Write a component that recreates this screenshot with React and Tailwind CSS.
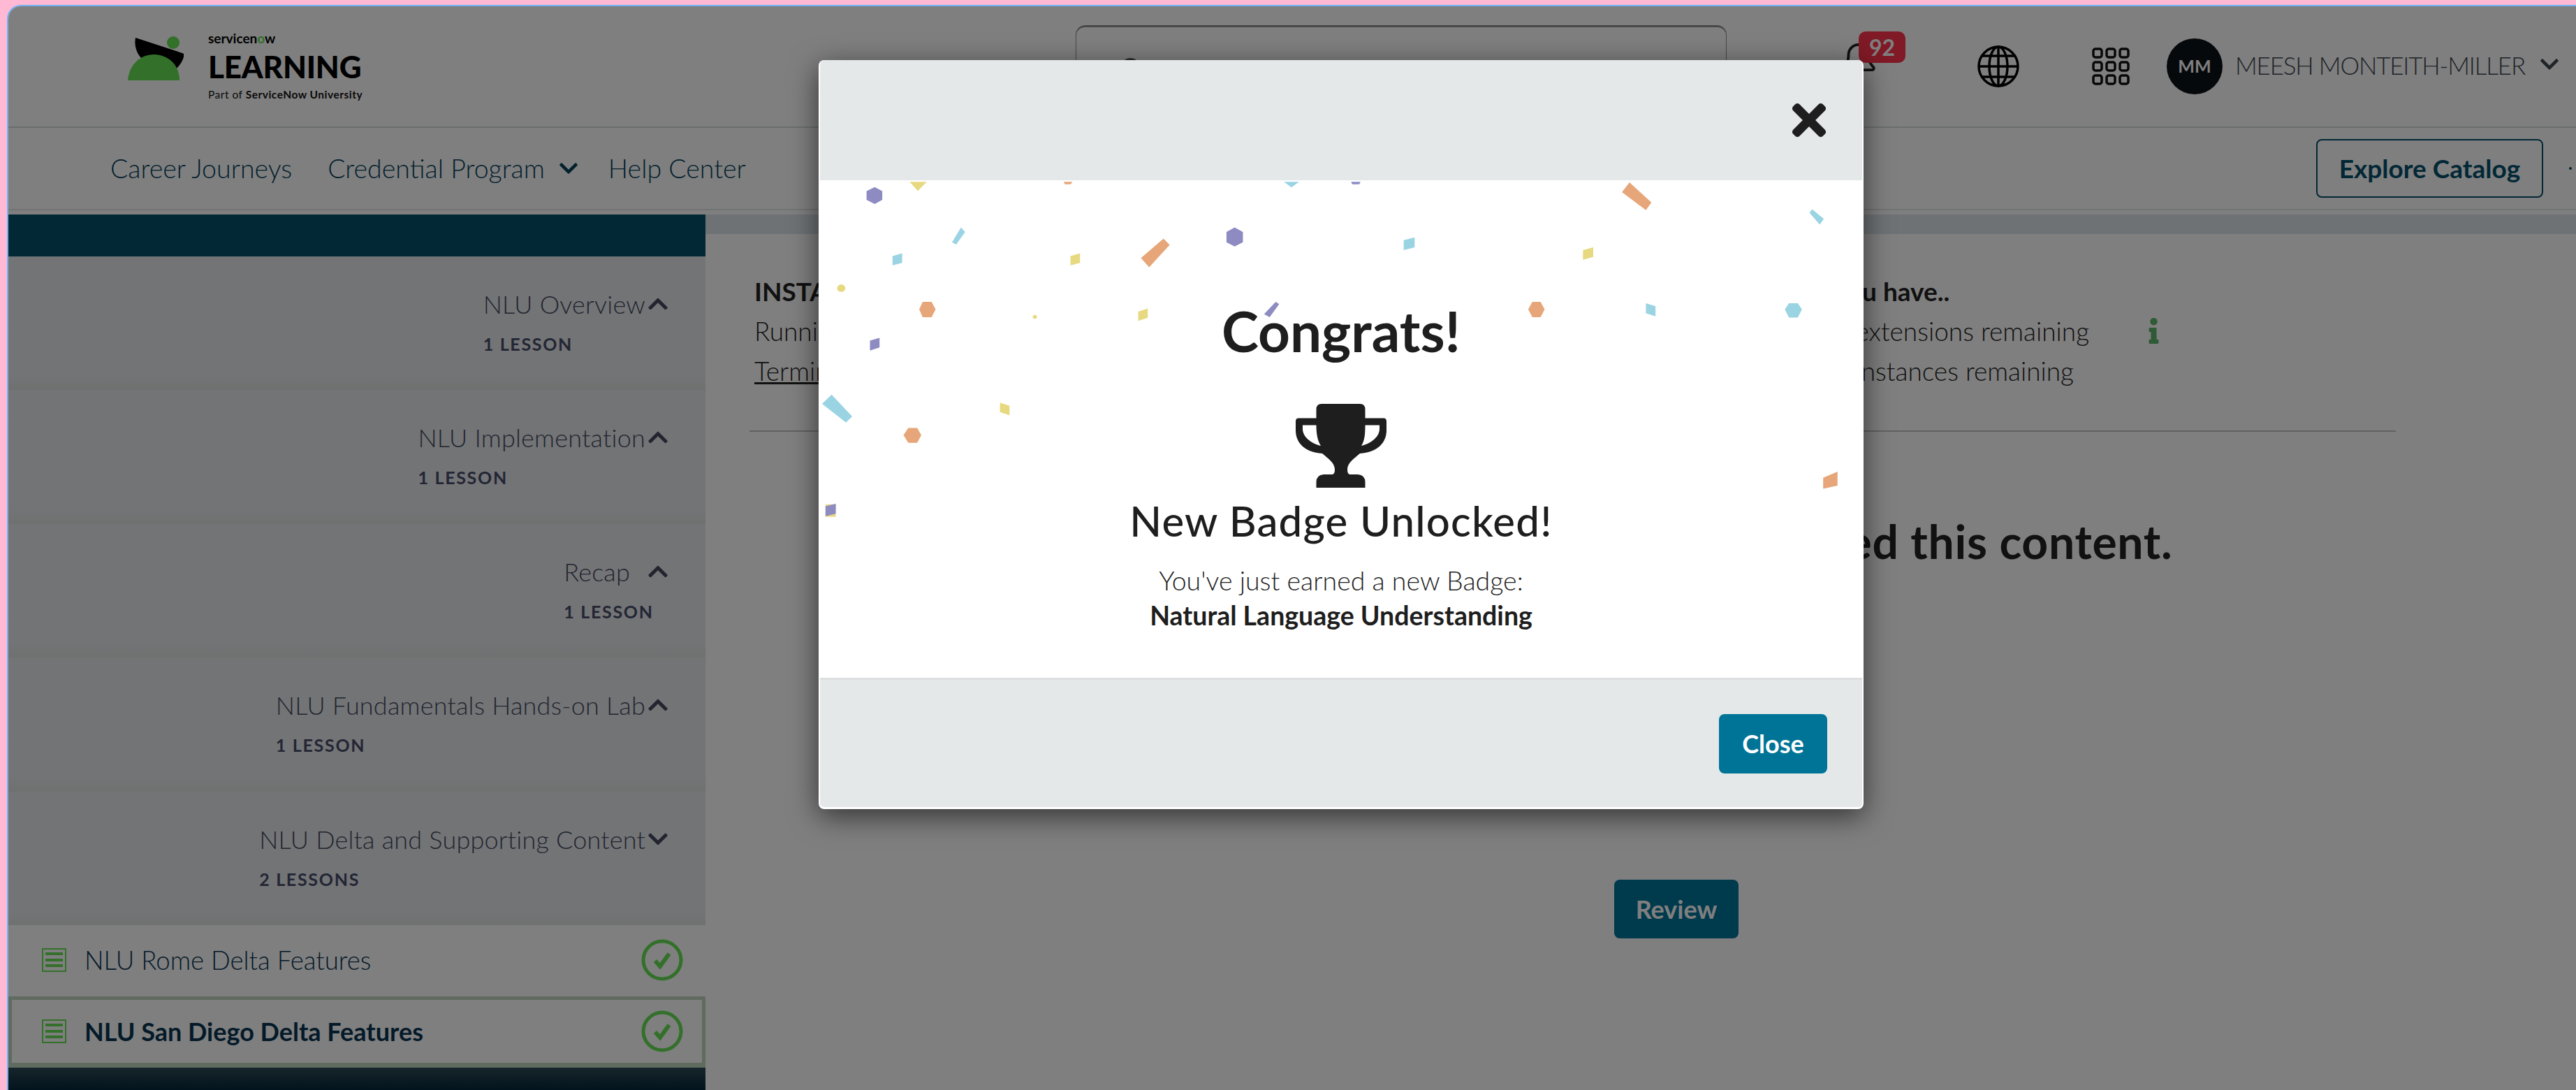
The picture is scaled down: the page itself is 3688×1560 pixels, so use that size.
import { Bell, Search } from "lucide-react";
import { FaChevronDown, FaChevronUp, FaInfo, FaTimes } from "react-icons/fa";

const sections = [
  { title: "NLU Overview", lessons: "1 LESSON", open: true },
  { title: "NLU Implementation", lessons: "1 LESSON", open: true },
  { title: "Recap", lessons: "1 LESSON", open: true, gap: true },
  { title: "NLU Fundamentals Hands-on Lab", lessons: "1 LESSON", open: true },
  { title: "NLU Delta and Supporting Content", lessons: "2 LESSONS", open: false },
];

// confetti points are read off the modal body, in a 1523x1595 box
const PURPLE = "#8d8bc2";
const YELLOW = "#e7d97f";
const ORANGE = "#e6a679";
const CYAN = "#9ad4e3";
const confetti = [
  [PURPLE, "92,443 103,456 103,484 92,497 80,484 80,456"],
  [YELLOW, "143,426 168,426 155,455"],
  [ORANGE, "368,426 381,426 378,434 370,434"],
  [CYAN, "690,426 712,426 701,444"],
  [PURPLE, "788,426 802,426 800,434 790,434"],
  [ORANGE, "1195,428 1227,492 1219,517 1184,459"],
  [CYAN, "1462,514 1479,545 1473,563 1458,525"],
  [CYAN, "218,572 224,587 211,627 205,620"],
  [CYAN, "118,664 132,655 132,686 118,694"],
  [YELLOW, "378,664 392,655 392,686 378,694"],
  [ORANGE, "514,608 523,628 493,700 481,670"],
  [PURPLE, "618,572 630,587 630,620 618,633 606,620 606,587"],
  [CYAN, "865,613 881,604 881,636 865,645"],
  [YELLOW, "1127,645 1142,636 1142,667 1127,676"],
  [ORANGE, "162,811 175,811 181,835 175,860 162,860 157,835"],
  [YELLOW, "477,842 491,832 491,862 477,872"],
  [PURPLE, "678,811 683,818 669,860 661,850"],
  [ORANGE, "1053,811 1065,811 1071,835 1065,860 1053,860 1047,835"],
  [CYAN, "1219,815 1233,825 1233,857 1219,847"],
  [CYAN, "1428,815 1441,815 1447,835 1441,861 1428,861 1422,835"],
  [PURPLE, "85,935 99,926 99,957 85,967"],
  [CYAN, "29,1108 59,1178 50,1198 15,1138"],
  [YELLOW, "275,1134 289,1144 289,1174 275,1164"],
  [ORANGE, "141,1215 154,1215 160,1238 154,1263 141,1263 134,1238"],
  [ORANGE, "1478,1375 1499,1355 1499,1400 1478,1410"],
  [YELLOW, "20,1460 35,1460 35,1500 20,1500"],
  [PURPLE, "20,1466 35,1458 35,1490 20,1498"],
];

const Logo = () => (
  <div className="flex items-start">
    <svg width="80" height="66" viewBox="0 0 80 66" className="mt-[41px] shrink-0">
      <path d="M11 4 L81 27 C79 40 70 50 58 56 L20 34 C12 26 9 14 11 4 Z" fill="#000" />
      <circle cx="65" cy="11" r="9" fill="#66e054" />
      <path d="M0 65 C2 42 18 28 37 28 C57 28 74 42 74 65 Z" fill="#66e054" />
    </svg>
    <div className="ml-[35px] mt-[35px] flex w-[222px] flex-col">
      <div className="h-[22px] text-[19px] font-bold leading-[22px] text-black">
        servicen<span className="text-[#66e054]">o</span>w
      </div>
      <div className="mt-[7px] h-[44px] text-[44px] font-black leading-[44px] tracking-[-0.2px] text-black">LEARNING</div>
      <div className="mt-[7px] whitespace-nowrap text-[15.5px] leading-[22px] tracking-[0.5px] text-[#111]">
        Part of <span className="font-bold">ServiceNow University</span>
      </div>
    </div>
  </div>
);

const Globe = () => (
  <svg width="60" height="60" viewBox="0 0 60 60" fill="none" stroke="#000" strokeWidth="3.5">
    <circle cx="30" cy="30" r="28" />
    <ellipse cx="30" cy="30" rx="13" ry="28" />
    <path d="M30 2 V58 M2 30 H58 M7 15 H53 M7 45 H53" />
  </svg>
);

const AppGrid = () => (
  <svg width="54" height="54" viewBox="0 0 54 54" fill="none" stroke="#111" strokeWidth="3.5">
    {[0, 19, 38].map((y) =>
      [0, 19, 38].map((x) => <rect key={`${x}-${y}`} x={x + 2} y={y + 2} width="12" height="12" rx="3" />)
    )}
  </svg>
);

const LessonIcon = () => (
  <svg width="35" height="34" viewBox="0 0 35 34" className="shrink-0">
    <rect x="1" y="1" width="33" height="32" fill="none" stroke="#66e054" strokeWidth="2" />
    <rect x="5" y="6" width="25" height="4" fill="#66e054" />
    <rect x="5" y="15" width="25" height="4" fill="#66e054" />
    <rect x="5" y="23" width="25" height="4" fill="#66e054" />
  </svg>
);

const CheckCircle = () => (
  <svg width="60" height="60" viewBox="0 0 60 60" fill="none" className="shrink-0">
    <circle cx="30" cy="30" r="27" stroke="#66e054" strokeWidth="5" />
    <path d="M20 31 L27 39 L40 21" stroke="#66e054" strokeWidth="6" />
  </svg>
);

const Trophy = () => (
  <svg width="130" height="120" viewBox="0 0 130 120" fill="#1e1e1e">
    <path
      fillRule="evenodd"
      d="M37 0 H92 Q99.5 0 99.5 8 V20.5 H126 Q130 20.5 130 25 V38 C130 55 118 69 92 71 C84 78 74 84 74 94 C74 98 75 100 77 101 H89 Q99.5 102 99.5 112 V120 H29.5 V112 Q29.5 102 40 101 H53 C55 100 56 98 56 94 C56 84 46 78 38 71 C12 69 0 55 0 38 V25 Q0 20.5 4 20.5 H29.5 V8 Q29.5 0 37 0 Z M10 30.5 H29.5 C29.5 42 31 52 36 60 C20 56 10 46 10 36 Z M120 30.5 H99.5 C99.5 42 99 52 94 60 C110 56 120 46 120 36 Z"
    />
  </svg>
);

const Section = ({ section }) => (
  <div className="flex h-[191.4px] flex-col items-end bg-gradient-to-b from-[#e6e8ec] via-[#e6e8ec] via-90% to-[#dfe2e0] pr-[52px] pt-[46px]">
    <div>
      <div className="flex h-[44px] items-center text-[#444a5e]">
        <span className="whitespace-nowrap text-[36px] font-light leading-[44px] tracking-[0.2px]">{section.title}</span>
        {section.gap && <span className="w-[22px]" />}
        {section.open ? (
          <FaChevronUp size={32} className="ml-[2px] shrink-0" />
        ) : (
          <FaChevronDown size={32} className="ml-[2px] shrink-0" />
        )}
      </div>
      <div className="mt-[20px] text-[25px] font-bold leading-[30px] tracking-[1.7px] text-[#464c68]">{section.lessons}</div>
    </div>
  </div>
);

const LessonRow = ({ label, active }) => (
  <div
    className={`flex items-center bg-white ${
      active
        ? "mt-[2px] h-[102px] border-x-[5px] border-t-[5px] border-b-[7px] border-[#c0d6c0] pl-[43px] pr-[27px]"
        : "h-[100px] pl-[48px] pr-[32px]"
    }`}
  >
    <LessonIcon />
    <span className={`ml-[26px] flex-1 whitespace-nowrap text-[#083450] ${active ? "text-[36px] font-bold" : "text-[36.5px] font-light"}`}>
      {label}
    </span>
    <CheckCircle />
  </div>
);

const App = () => {
  return (
    <div className="h-[1560px] w-full overflow-hidden bg-[#ffb9d4] pl-[10px] pt-[7px] font-[Lato,sans-serif]">
      <div className="relative flex h-[1553px] flex-col overflow-hidden rounded-tl-[20px] border-l-2 border-t-2 border-[#6db3f2] bg-white">
        {/* header */}
        <header className="flex h-[174px] shrink-0 items-start border-b-2 border-[#d4dcdc]">
          <div className="ml-[171px] w-[1357px] shrink-0">
            <Logo />
          </div>
          <div className="mt-[27px] flex h-[112px] w-[932px] shrink-0 items-center rounded-[14px] border-x border-t-[3px] border-[#909090] pl-[60px] pt-[10px] text-[36px] text-[#444]">
            <Search size={38} className="mr-[20px] shrink-0" />
            <span className="whitespace-nowrap">Search courses, learning paths, and more</span>
          </div>
          <div className="relative ml-[160px] mt-[50px] shrink-0">
            <Bell size={58} strokeWidth={1.6} className="text-[#222]" />
            <span className="absolute left-[29px] top-[-14px] flex h-[45px] w-[67px] items-center justify-center rounded-[10px] bg-[#fe344c] text-[32px] font-bold text-white">
              92
            </span>
          </div>
          <div className="ml-[141px] mt-[56px] shrink-0">
            <Globe />
          </div>
          <div className="ml-[104px] mt-[59px] shrink-0">
            <AppGrid />
          </div>
          <div className="ml-[53px] mt-[46px] flex h-[80px] w-[80px] shrink-0 items-center justify-center rounded-full bg-[#0c1218] text-[25px] font-bold text-white">
            MM
          </div>
          <span className="ml-[18px] mt-[60px] whitespace-nowrap text-[35px] font-light leading-[48px] tracking-[-1.2px] text-[#3e4850]">
            MEESH MONTEITH-MILLER
          </span>
          <FaChevronDown size={30} className="ml-[20px] mt-[68px] shrink-0 text-[#3e4850]" />
        </header>

        {/* nav */}
        <nav className="flex h-[118px] shrink-0 items-center border-b-2 border-[#e2e4e4] pl-[146px] text-[37.5px] font-light text-[#05405a]">
          <span>Career Journeys</span>
          <span className="ml-[51px]">Credential Program</span>
          <FaChevronDown size={30} className="ml-[19px]" />
          <span className="ml-[42px]">Help Center</span>
          <div className="ml-auto flex h-[84px] w-[325px] items-center justify-center rounded-[8px] border-2 border-[#04506c] text-[37px] font-bold text-[#04506c]">
            Explore Catalog
          </div>
          <div className="ml-[37px] mr-[6px] h-[4px] w-[4px] rounded-full bg-[#04506c]" />
        </nav>

        <div className="mt-[6px] flex min-h-0 flex-1">
          {/* sidebar */}
          <aside className="flex w-[998px] shrink-0 flex-col">
            <div className="h-[60px] bg-[#04506c]" />
            {sections.map((section) => (
              <Section key={section.title} section={section} />
            ))}
            <LessonRow label="NLU Rome Delta Features" />
            <LessonRow label="NLU San Diego Delta Features" active />
            <div className="flex-1 bg-gradient-to-b from-[#2e4a58] to-[#042839]" />
          </aside>

          {/* main */}
          <main className="flex min-w-0 flex-1 flex-col">
            <div className="h-[28px] shrink-0 bg-[#dce4ea]" />
            <div className="ml-[63px] mr-[258px] mt-[53px] flex h-[230px] border-b-2 border-[#c4c4c4] pl-[7px] text-[37px] font-light leading-[57px] text-[#222]">
              <div className="w-[1545px] shrink-0">
                <div className="font-bold">INSTANCE USAGE</div>
                <div>Running instances</div>
                <div className="underline">Terminate</div>
              </div>
              <div>
                <div className="font-bold">You have..</div>
                <div className="flex items-center">
                  <span className="whitespace-nowrap">2 extensions remaining</span>
                  <FaInfo size={37} className="ml-[74px] shrink-0 text-[#5eb46a]" />
                </div>
                <div className="whitespace-nowrap">1 instances remaining</div>
              </div>
            </div>
            <div className="ml-[102px] flex flex-col items-center">
              <div className="mt-[121px] whitespace-nowrap text-[66px] font-bold leading-[72px] tracking-[0.7px] text-[#222]">
                You have successfully experienced this content.
              </div>
              <div className="mt-[448px] flex h-[84px] w-[178px] items-center justify-center rounded-[8px] bg-[#00749a] text-[36px] font-bold text-white">
                Review
              </div>
            </div>
          </main>
        </div>

        {/* backdrop */}
        <div className="absolute inset-0 bg-black/50" />

        {/* congrats modal */}
        <div className="absolute left-[1160px] top-[77px] flex h-[1072px] w-[1496px] flex-col overflow-hidden rounded-[8px] border-x-2 border-b-[3px] border-white bg-white shadow-[0_10px_40px_rgba(0,0,0,0.6)]">
          <div className="flex h-[172px] shrink-0 items-center justify-end bg-[#e4e8e9] pr-[41px]">
            <FaTimes size={70} className="text-[#1e1e1e]" />
          </div>
          <div className="relative flex flex-1 flex-col items-center text-[#1e1e1e]">
            <svg
              className="absolute inset-0 h-full w-full"
              viewBox="12 421 1523 1595"
              preserveAspectRatio="none"
            >
              {confetti.map(([color, points]) => (
                <polygon key={points} points={points} fill={color} />
              ))}
              <ellipse cx="43" cy="767" rx="6" ry="12" fill={YELLOW} />
              <ellipse cx="326" cy="859" rx="3" ry="6" fill={YELLOW} />
            </svg>
            <div className="relative mt-[170px] text-[80px] font-bold leading-[90px]">Congrats!</div>
            <div className="relative mt-[60px] h-[120px]">
              <Trophy />
            </div>
            <div className="relative mt-[12px] text-[60px] font-medium leading-[70px] tracking-[1.2px]">New Badge Unlocked!</div>
            <div className="relative mt-[26px] text-[37.5px] font-light leading-[50px]">You&apos;ve just earned a new Badge:</div>
            <div className="relative text-[37.5px] font-bold leading-[50px]">Natural Language Understanding</div>
          </div>
          <div className="flex h-[185px] shrink-0 items-center justify-end border-t-[3px] border-[#dcdfdf] bg-[#e4e8e9] pr-[50px]">
            <div className="flex h-[85px] w-[155px] items-center justify-center rounded-[8px] bg-[#007496] text-[36px] font-bold text-white">
              Close
            </div>
          </div>
        </div>
      </div>
    </div>
  );
};

export default App;
